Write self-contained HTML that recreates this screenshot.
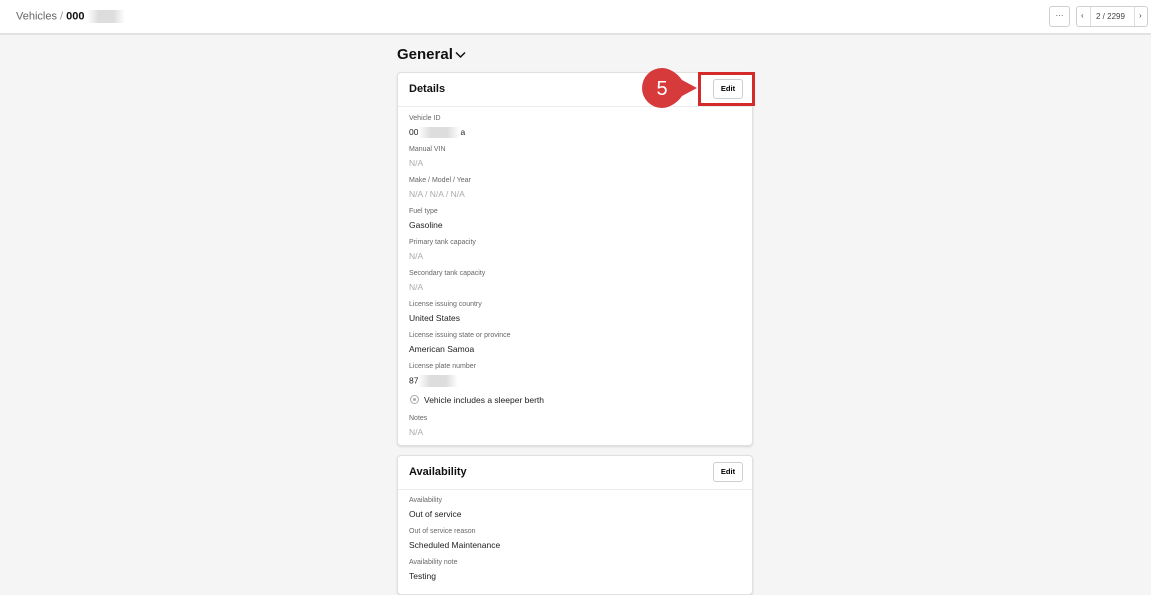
<!DOCTYPE html>
<html><head><style>
body{margin:0;width:1151px;height:586px;overflow:hidden;background:#f5f5f5;font-family:"Liberation Sans",sans-serif;position:relative}
.top{position:absolute;left:0;top:0;width:1151px;height:33px;background:#fff;border-bottom:2px solid #e2e2e2}
.abs{position:absolute}
.btn{position:absolute;background:#fff;border:1px solid #cfcfcf;border-radius:3px;box-sizing:border-box}
.card{position:absolute;left:397px;width:356px;background:#fff;border:1px solid #e0e0e0;border-radius:4px;box-sizing:border-box;box-shadow:0 1px 2px rgba(0,0,0,.12)}
.hd{position:absolute;left:0;right:0;top:0;height:33px;border-bottom:1px solid #ececec}
.hd span{position:absolute;left:11px;top:10px;font-size:11px;font-weight:bold;color:#111}
.lab{position:absolute;left:409px;font-size:7px;color:#666}
.val{position:absolute;left:409px;font-size:8.5px;color:#222}
.na{color:#aaa}
.blur{display:inline-block;background:linear-gradient(90deg,#fff,#ddd 30%,#ddd 70%,#fff);vertical-align:middle}
</style></head><body>
<div class="top"></div>
<div class="abs" style="left:16px;top:10px;font-size:11px;color:#666">Vehicles <span style="color:#999">/</span> <b style="color:#111">000</b><span class="blur" style="width:38px;height:13px;margin-left:2px"></span></div>
<div class="btn" style="left:1049px;top:6px;width:21px;height:21px;font-size:8px;text-align:center;line-height:18px;color:#333">···</div>
<div class="btn" style="left:1076px;top:6px;width:72px;height:21px;font-size:8px;color:#444">
<span class="abs" style="left:4px;top:4px">‹</span><span class="abs" style="left:13px;top:0;width:1px;height:19px;background:#ddd"></span>
<span class="abs" style="left:19px;top:5px">2 / 2299</span>
<span class="abs" style="left:57px;top:0;width:1px;height:19px;background:#ddd"></span><span class="abs" style="left:62px;top:4px">›</span></div>
<div class="abs" style="left:397px;top:46px;font-size:15px;font-weight:bold;color:#111">General</div>
<svg class="abs" style="left:455px;top:51px" width="11" height="8"><path d="M1 1.5L5.5 6L10 1.5" fill="none" stroke="#111" stroke-width="1.5"/></svg>

<div class="card" style="top:72px;height:374px"><div class="hd"><span>Details</span></div>
<div class="btn" style="left:315px;top:6px;width:30px;height:20px;font-size:7.5px;font-weight:bold;text-align:center;line-height:18px">Edit</div></div>
<div class="lab" style="top:115px">Vehicle ID</div><div class="val" style="top:127px">00<span class="blur" style="width:42px;height:11px"></span>a</div>
<div class="lab" style="top:146px">Manual VIN</div><div class="val na" style="top:158px">N/A</div>
<div class="lab" style="top:177px">Make / Model / Year</div><div class="val na" style="top:189px">N/A / N/A / N/A</div>
<div class="lab" style="top:208px">Fuel type</div><div class="val" style="top:220px">Gasoline</div>
<div class="lab" style="top:239px">Primary tank capacity</div><div class="val na" style="top:251px">N/A</div>
<div class="lab" style="top:270px">Secondary tank capacity</div><div class="val na" style="top:282px">N/A</div>
<div class="lab" style="top:301px">License issuing country</div><div class="val" style="top:313px">United States</div>
<div class="lab" style="top:332px">License issuing state or province</div><div class="val" style="top:344px">American Samoa</div>
<div class="lab" style="top:363px">License plate number</div><div class="val" style="top:375px">87<span class="blur" style="width:40px;height:12px"></span></div>
<div class="abs" style="left:410px;top:395px;width:7px;height:7px;border:1px solid #aaa;border-radius:50%"></div>
<div class="abs" style="left:413px;top:398px;width:3px;height:3px;background:#aaa;border-radius:50%"></div>
<div class="val" style="left:424px;top:395px">Vehicle includes a sleeper berth</div>
<div class="lab" style="top:415px">Notes</div><div class="val na" style="top:427px">N/A</div>

<div class="card" style="top:455px;height:140px"><div class="hd"><span>Availability</span></div>
<div class="btn" style="left:315px;top:6px;width:30px;height:20px;font-size:7.5px;font-weight:bold;text-align:center;line-height:18px">Edit</div></div>
<div class="lab" style="top:497px">Availability</div><div class="val" style="top:509px">Out of service</div>
<div class="lab" style="top:528px">Out of service reason</div><div class="val" style="top:540px">Scheduled Maintenance</div>
<div class="lab" style="top:559px">Availability note</div><div class="val" style="top:571px">Testing</div>

<div class="abs" style="left:698px;top:72px;width:57px;height:34px;border:3px solid #d42a2a;box-sizing:border-box"></div>
<svg class="abs" style="left:640px;top:68px" width="60" height="40"><path d="M22 0A20 20 0 1 0 22 40C30 40 38 34 42 28L57 20L42 12C38 6 30 0 22 0Z" fill="#d63a3a"/>
<text x="22" y="27" font-family="Liberation Sans" font-size="20" fill="#fff" text-anchor="middle">5</text></svg>
</body></html>
